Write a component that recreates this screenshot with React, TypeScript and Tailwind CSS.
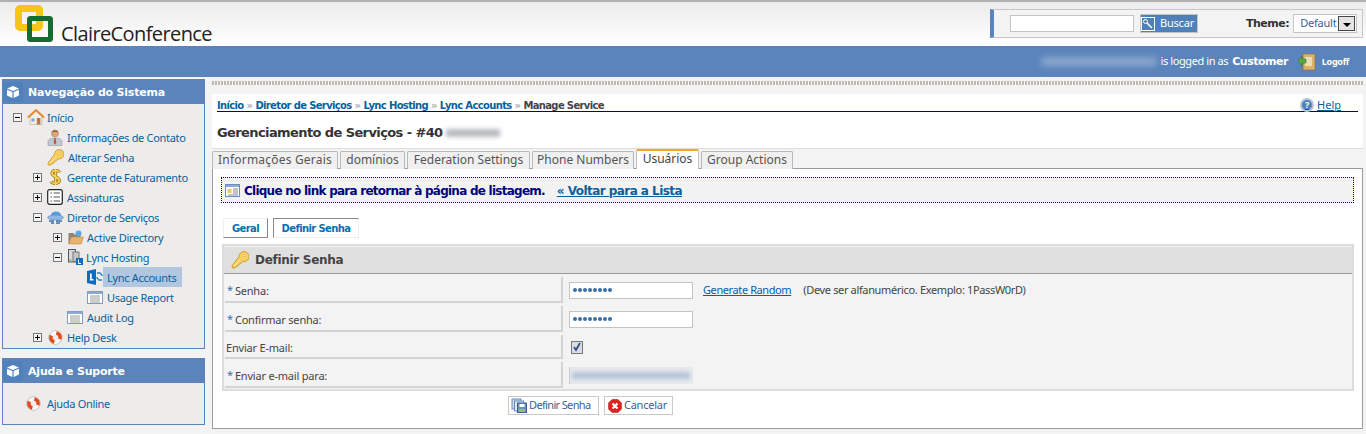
import React from 'react';

const font = "font-['Noto_Sans','Liberation_Sans',sans-serif]";

const Cube = () => (
  <svg width="14" height="14" viewBox="0 0 14 14">
    <path d="M7 1 13 3.5 7 6 1 3.5Z" fill="#fff" />
    <path d="M1 4.7 6.4 7v6L1 10.6Z" fill="#fff" />
    <path d="M13 4.7 7.6 7v6l5.4-2.4Z" fill="#fff" />
  </svg>
);

const Expander = ({ open }: { open?: boolean }) => (
  <span className="w-[9px] h-[9px] border border-[#777] bg-[#f4f4f4] flex items-center justify-center relative shrink-0">
    <span className="w-[5px] h-px bg-black" />
    {!open && <span className="absolute w-px h-[5px] bg-black" />}
  </span>
);

const KeyIcon = ({ size = 18 }: { size?: number }) => (
  <svg width={size} height={size} viewBox="0 0 18 18">
    <path d="M8 5.500A5 5 0 1 1 12.500 10.500L11 11l-1 1.500-2 .5-1 2-2 .5-1 1.500H1.500L1 15Z" fill="#f7cf62" stroke="#d49a28" />
    <ellipse cx="13.500" cy="4.500" rx="1.500" ry="1" fill="#fff4c8" stroke="#d49a28" strokeWidth=".5" />
    <path d="M3 15l6-6" stroke="#fff0b0" />
  </svg>
);

const LifeRing = () => (
  <svg width="15" height="17" viewBox="0 0 15 17">
    <circle cx="7.500" cy="8.500" r="6.700" fill="none" stroke="#b5b5b5" strokeWidth="1" />
    <circle cx="7.500" cy="8.500" r="4.600" fill="none" stroke="#f8f8f8" strokeWidth="3.600" />
    <circle cx="7.500" cy="8.500" r="4.600" fill="none" stroke="#e4491b" strokeWidth="3.600" strokeDasharray="8 6.450" transform="rotate(-80 7.500 8.500)" />
  </svg>
);

const ReportIcon = () => (
  <svg width="16" height="13" viewBox="0 0 16 13">
    <rect x=".5" y=".5" width="15" height="12" fill="#fff" stroke="#7f9cc6" />
    <rect x="1" y="1" width="14" height="2" fill="#8fa9d0" />
    <path d="M3 5h10M3 7h10M3 9h10M3 11h10" stroke="#9a9a9a" strokeWidth="1" />
  </svg>
);

const LyncBadge = () => (
  <svg width="16" height="16" viewBox="0 0 16 16">
    <path d="M0 2 9 0v16L0 14Z" fill="#0b6cc0" />
    <path d="M3 4.500v7h3.500V10H4.700V4.500Z" fill="#fff" />
    <path d="M10 4h3l2 2v1M15 11h-3l-2-2V8" fill="none" stroke="#2f80cf" strokeWidth="1.400" />
  </svg>
);

const HomeIcon = () => (
  <svg width="18" height="16" viewBox="0 0 18 16">
    <path d="M3 8v7.500h12V8L9 2.500Z" fill="#f3efe6" stroke="#b9a98f" strokeWidth=".6" />
    <path d="M.8 8.500 9 1l8.200 7.500" fill="none" stroke="#e8892b" strokeWidth="1.800" />
    <rect x="9.800" y="9" width="3.600" height="6.500" fill="#b9774a" />
    <rect x="4.500" y="9.500" width="3" height="3" fill="#7ea6d8" />
  </svg>
);

const PersonIcon = () => (
  <svg width="16" height="17" viewBox="0 0 16 17">
    <circle cx="8" cy="4.500" r="3.500" fill="#d9a77d" stroke="#a9744d" strokeWidth=".5" />
    <path d="M4.800 3.200C5.500 1 10.500 1 11.200 3.200L8 2.800Z" fill="#8d5a34" />
    <path d="M1 16.500v-3.500c0-3 3-4 7-4s7 1 7 4v3.500Z" fill="#c3c7cf" stroke="#8b8f99" strokeWidth=".5" />
    <path d="M7.300 9h1.400l.6 5-1.300 1.500L6.700 14Z" fill="#c84f3b" />
  </svg>
);

const DollarIcon = () => (
  <svg width="13" height="18" viewBox="0 0 13 18">
    <path d="M10.500 4.500C9.500 2 3.500 1.500 3 5c-.5 4 7.500 3.500 7.300 7.500C10 16 3.500 16 2.300 13.500M6.500 1v16" fill="none" stroke="#a87a12" strokeWidth="3.200" />
    <path d="M10.500 4.500C9.500 2 3.500 1.500 3 5c-.5 4 7.500 3.500 7.300 7.500C10 16 3.500 16 2.300 13.500M6.500 1v16" fill="none" stroke="#f6d55b" strokeWidth="1.600" />
  </svg>
);

const ListIcon = () => (
  <svg width="16" height="16" viewBox="0 0 16 16">
    <rect x=".7" y=".7" width="14.600" height="14.600" rx="2" fill="#fff" stroke="#222" strokeWidth="1.200" />
    <path d="M3.500 4h1.500M6.500 4H13M3.500 8h1.500M6.500 8H13M3.500 12h1.500M6.500 12H13" stroke="#555" strokeWidth="1.200" />
  </svg>
);

const CloudIcon = () => (
  <svg width="17" height="14" viewBox="0 0 17 14">
    <ellipse cx="9" cy="5" rx="5" ry="3.500" fill="#5b9bdc" />
    <ellipse cx="8.500" cy="7.500" rx="8" ry="2.500" fill="#8fb9e4" stroke="#4a7fb8" strokeWidth=".5" />
    <path d="M2 11h5M9 11h6M4 13h3M9 13h4" stroke="#3b6ea8" strokeWidth="1.300" />
  </svg>
);

const FolderIcon = () => (
  <svg width="16" height="15" viewBox="0 0 16 15">
    <path d="M.5 3h5l1 1.500h6V14H.5Z" fill="#8d8577" />
    <path d="M3 7h12.500L13 14H.8Z" fill="#eab26a" stroke="#b57d38" strokeWidth=".5" />
    <circle cx="10.500" cy="3.500" r="3" fill="#5ba8e6" />
  </svg>
);

const ServerIcon = () => (
  <svg width="16" height="16" viewBox="0 0 16 16">
    <rect x=".5" y=".5" width="7" height="12.500" fill="#d9d9d9" stroke="#555" />
    <rect x="5" y="3" width="6" height="9.500" fill="#c5c5c5" stroke="#777" />
    <rect x="8" y="9" width="7" height="7" fill="#0b6cc0" />
    <path d="M10.500 10.500v4h2.500" fill="none" stroke="#fff" />
    <rect x="1.500" y="10.500" width="2" height="1" fill="#3aa23a" />
  </svg>
);

const TreeLabel = ({ children }: { children: React.ReactNode }) => (
  <span className="block text-[#0a5f9e] text-[11px] leading-none whitespace-nowrap tracking-[-0.3px]">{children}</span>
);

const SideHeader = ({ title }: { title: string }) => (
  <div className="h-[25px] bg-[#5a84bb] flex items-center">
    <div className="w-[20px] h-[20px] bg-[#4f81bd] flex items-center justify-center">
      <Cube />
    </div>
    <span className="ml-[5px] pt-[3px] text-white font-bold text-[11px] tracking-[-0.2px] font-['DejaVu_Sans',sans-serif]">{title}</span>
  </div>
);

const Row = ({ pl, children }: { pl: number; children: React.ReactNode }) => (
  <div className="h-[20px] flex items-center" style={{ paddingLeft: pl }}>
    {children}
  </div>
);

const Tab = ({ label, width, active }: { label: string; width: string; active?: boolean }) => (
  <div
    className={
      active
        ? `${width} h-[20px] pb-[2px] flex items-center justify-center bg-white border border-[#c2c2c2] border-b-0 border-t-2 border-t-[#f0a830] rounded-t-[2px] text-[12px] text-[#444] relative z-10`
        : `${width} h-[18px] pb-[2px] flex items-center justify-center bg-[#f0f0f0] border border-[#b9b9b9] border-b-0 rounded-t-[2px] text-[12px] text-[#555]`
    }
  >
    {label}
  </div>
);

const FormRow = ({ h, required, label, children }: { h: string; required?: boolean; label: string; children?: React.ReactNode }) => (
  <div className={`flex ${h}`}>
    <div className="w-[338px] ml-[1px] mb-[3px] pt-[4px] border-b-2 border-r-2 border-[#d4d4d4] flex items-center pl-[1px] text-[11px] text-[#444] tracking-[-0.2px]">
      {required && <span className="text-[#2f6fb0] mr-[2px] ml-[1px] -mt-[2px]">*</span>}
      <span>{label}</span>
    </div>
    <div className="flex-1 flex items-center pl-[6px] mb-[3px]">{children}</div>
  </div>
);

const PwInput = () => (
  <div className="w-[124px] h-[17px] bg-white border border-[#c4c4c4] flex items-center pl-[3px] gap-[1px]">
    {[0, 1, 2, 3, 4, 5, 6, 7].map((i) => (
      <span key={i} className="w-[4px] h-[4px] rounded-full bg-[#3a6ea5]" />
    ))}
  </div>
);

export default function App() {
  return (
    <div className={`w-[1366px] h-[434px] overflow-hidden bg-[#f3f3f3] ${font}`}>
      <div className="h-[46px] border-t-2 border-[#b0b0b0] bg-gradient-to-b from-[#ececec] to-white flex justify-between">
        <div className="flex pl-[15px] pt-[3px]">
          <svg width="40" height="38" viewBox="0 0 40 38">
            <rect x="3.500" y="3.500" width="21" height="19" rx="1.500" fill="none" stroke="#f5c518" strokeWidth="7" />
            <rect x="14.500" y="13.500" width="21" height="21" rx="1" fill="none" stroke="#176b32" strokeWidth="5" />
          </svg>
          <span className="ml-[6px] mt-[17px] text-[20px] leading-[24px] font-medium text-[#222] font-['Open_Sans',sans-serif] tracking-[-0.6px]">
            ClaireConference
          </span>
        </div>
        <div className="mt-[7px] mr-[3px] w-[373px] h-[29px] border border-[#c6c6c6] border-l-[4px] border-l-[#5a84bb] bg-[#f3f3f3] flex items-center pl-[16px]">
          <div className="w-[124px] h-[17px] bg-white border border-[#c4c4c4]" />
          <div className="ml-[6px] w-[58px] h-[19px] bg-[#4f81b8] border border-[#c4c4c4] flex items-center">
            <span className="w-[14px] h-[14px] border border-white flex items-center justify-center">
              <svg width="12" height="12" viewBox="0 0 12 12">
                <circle cx="3.500" cy="3.500" r="2" fill="none" stroke="#fff" />
                <path d="M5 5l5 5" stroke="#fff" strokeWidth="1.500" />
              </svg>
            </span>
            <span className="ml-[5px] text-[11px] text-white tracking-[-0.2px]">Buscar</span>
          </div>
          <span className="ml-[48px] pt-[2px] text-[11px] font-bold text-[#333] font-['DejaVu_Sans',sans-serif] tracking-[-0.5px]">Theme:</span>
          <div className="ml-[4px] w-[64px] h-[19px] bg-white border border-[#c4c4c4] flex items-center justify-between pl-[6px] pr-[1px]">
            <span className="text-[11px] text-[#3b5f95] tracking-[-0.2px]">Default</span>
            <span className="w-[17px] h-[15px] bg-[#e4e4e4] border border-[#444] flex items-center justify-center">
              <span className="w-0 h-0 border-x-[4px] border-x-transparent border-t-[4px] border-t-black mt-[2px]" />
            </span>
          </div>
        </div>
      </div>

      <div className="h-[31px] bg-[#5a84bb] flex items-center justify-end text-white text-[11px]">
        <span className="w-[116px] h-[9px] mr-[3px] bg-[#8aa6cd] rounded-[4px] blur-[3px]" />
        <span className="tracking-[-0.4px]">is logged in as</span>
        <span className="ml-[4px] pt-[2px] font-bold font-['DejaVu_Sans',sans-serif] tracking-[-0.5px]">Customer</span>
        <svg className="ml-[10px]" width="18" height="18" viewBox="0 0 18 18">
          <rect x="5" y="1" width="12" height="16" fill="#dcb26a" stroke="#8a6a33" strokeWidth=".6" />
          <rect x="7" y="4" width="7" height="9" fill="#e9ddb8" />
          <path d="M8 6H4V3L0 8l4 5v-3h4Z" fill="#58a845" stroke="#2f6f2a" strokeWidth=".5" />
        </svg>
        <span className="ml-[6px] mr-[17px] text-[9px] font-bold tracking-[-0.3px]">Logoff</span>
      </div>

      <div className="flex pt-[2px] pl-[2px]">
        <aside className="w-[203px] shrink-0">
          <div className="h-[270px] border border-[#5a84bb] border-t-0 bg-[#edecea]">
            <SideHeader title="Navegação do Sistema" />
            <div className="pt-[3px]">
              <Row pl={10}>
                <Expander open />
                <span className="ml-[5px] mr-[2px] flex"><HomeIcon /></span>
                <TreeLabel>Início</TreeLabel>
              </Row>
              <Row pl={44}>
                <span className="w-[20px] flex"><PersonIcon /></span>
                <TreeLabel>Informações de Contato</TreeLabel>
              </Row>
              <Row pl={44}>
                <span className="w-[21px] flex"><KeyIcon size={17} /></span>
                <TreeLabel>Alterar Senha</TreeLabel>
              </Row>
              <Row pl={30}>
                <Expander />
                <span className="ml-[7px] mr-[5px] flex"><DollarIcon /></span>
                <TreeLabel>Gerente de Faturamento</TreeLabel>
              </Row>
              <Row pl={30}>
                <Expander />
                <span className="ml-[5px] mr-[4px] flex"><ListIcon /></span>
                <TreeLabel>Assinaturas</TreeLabel>
              </Row>
              <Row pl={30}>
                <Expander open />
                <span className="ml-[5px] mr-[3px] flex"><CloudIcon /></span>
                <TreeLabel>Diretor de Serviços</TreeLabel>
              </Row>
              <Row pl={50}>
                <Expander />
                <span className="ml-[6px] mr-[3px] flex"><FolderIcon /></span>
                <TreeLabel>Active Directory</TreeLabel>
              </Row>
              <Row pl={50}>
                <Expander open />
                <span className="ml-[6px] mr-[2px] flex"><ServerIcon /></span>
                <TreeLabel>Lync Hosting</TreeLabel>
              </Row>
              <Row pl={84}>
                <LyncBadge />
                <span className="h-[20px] px-[4px] w-[79px] bg-[#b3c6df] flex items-center">
                  <TreeLabel>Lync Accounts</TreeLabel>
                </span>
              </Row>
              <Row pl={84}>
                <ReportIcon />
                <span className="ml-[4px] flex"><TreeLabel>Usage Report</TreeLabel></span>
              </Row>
              <Row pl={64}>
                <ReportIcon />
                <span className="ml-[4px] flex"><TreeLabel>Audit Log</TreeLabel></span>
              </Row>
              <Row pl={30}>
                <Expander />
                <span className="ml-[6px] mr-[4px] flex"><LifeRing /></span>
                <TreeLabel>Help Desk</TreeLabel>
              </Row>
            </div>
          </div>

          <div className="mt-[9px] h-[67px] border border-[#5a84bb] border-t-0 bg-[#edecea]">
            <SideHeader title="Ajuda e Suporte" />
            <div className="h-[42px] flex items-center pl-[23px] pb-[2px]">
              <LifeRing />
              <span className="ml-[6px] flex"><TreeLabel>Ajuda Online</TreeLabel></span>
            </div>
          </div>
        </aside>

        <main className="ml-[7px] flex-1 mr-[3px] min-w-0">
          <div className="h-[4px] mt-[2px] bg-[repeating-linear-gradient(90deg,#bdb9ae_0px,#bdb9ae_2px,#f3f3f3_2px,#f3f3f3_3px)]" />
          <div className="mt-[9px] bg-white h-[54px] pl-[5px] pr-[5px]">
            <div className="h-[18px] border-b border-[#000080] flex items-center justify-between pt-[5px] text-[10px] font-bold font-['DejaVu_Sans',sans-serif] tracking-[-0.65px]">
              <div className="flex items-center gap-[3px] text-[#0a5f9e]">
                <span>Início</span><span className="text-[#aaa]">»</span>
                <span>Diretor de Serviços</span><span className="text-[#aaa]">»</span>
                <span>Lync Hosting</span><span className="text-[#aaa]">»</span>
                <span>Lync Accounts</span><span className="text-[#aaa]">»</span>
                <span className="text-[#444]">Manage Service</span>
              </div>
              <div className="flex items-center gap-[3px] mr-[17px] font-normal text-[11px] text-[#0a5f9e] font-['Noto_Sans',sans-serif] tracking-normal underline">
                <span className="w-[14px] h-[14px] rounded-full bg-[#4f81bd] border-2 border-[#b8c4d4] flex items-center justify-center text-white text-[9px] font-bold no-underline">?</span>
                <span>Help</span>
              </div>
            </div>
            <div className="mt-[11px] flex items-center text-[13px] font-bold text-[#333] font-['DejaVu_Sans',sans-serif] tracking-[-0.6px]">
              Gerenciamento de Serviços - #40
              <span className="ml-[3px] w-[54px] h-[8px] bg-[#b9bcc0] blur-[2px]" />
            </div>
          </div>
          <div className="h-[21px] border-t border-[#ddd] flex items-end gap-[2px]">
            <Tab label="Informações Gerais" width="w-[126px] tracking-[0.2px]" />
            <Tab label="domínios" width="w-[65px]" />
            <Tab label="Federation Settings" width="w-[123px]" />
            <Tab label="Phone Numbers" width="w-[102px]" />
            <Tab label="Usuários" width="w-[63px]" active />
            <Tab label="Group Actions" width="w-[92px]" />
          </div>
          <div className="h-[261px] -mt-px border border-[#9c9c9c] bg-white px-[8px] pt-[8px]">
            <div className="h-[26px] border border-dotted border-[#000080] bg-[#f2f2f2] flex items-center pl-[3px] pt-[2px] text-[12px] font-bold font-['DejaVu_Sans',sans-serif] tracking-[-0.75px]">
              <svg className="-mt-[2px]" width="15" height="13" viewBox="0 0 15 13">
                <rect x=".5" y=".5" width="14" height="12" fill="#fff" stroke="#6d8fbf" />
                <rect x="1" y="1" width="13" height="2" fill="#8fa9d0" />
                <rect x="2.500" y="5" width="4" height="4" fill="#f2c94c" />
                <path d="M8 5h5M8 7h5M8 9h5M3 11h10" stroke="#888" />
              </svg>
              <span className="ml-[4px] text-[#000080]">Clique no link para retornar à página de listagem.</span>
              <span className="ml-[12px] text-[#0a5f9e] underline tracking-[-0.55px]">« Voltar para a Lista</span>
            </div>
            <div className="mt-[15px] ml-[2px] flex gap-[5px] text-[10px] font-bold text-[#0a6eb0] font-['DejaVu_Sans',sans-serif] tracking-[-0.6px]">
              <div className="h-[20px] w-[45px] border border-[#eee] border-r-[#888] border-b-[#888] flex items-center justify-center">Geral</div>
              <div className="h-[20px] w-[86px] border border-[#eee] border-l-[#888] border-t-[#888] flex items-center justify-center">Definir Senha</div>
            </div>
            <div className="mt-[6px] ml-[1px] h-[147px] border-2 border-[#dcdcdc] bg-[#f3f3f3] pt-px">
              <div className="h-[27px] bg-[#e0e0e0] border-b border-[#999] flex items-center pl-[7px]">
                <KeyIcon />
                <span className="ml-[6px] text-[12px] font-bold text-[#444] font-['DejaVu_Sans',sans-serif] tracking-[-0.3px]">Definir Senha</span>
              </div>
              <div className="pt-[3px]">
                <FormRow h="h-[29px]" required label="Senha:">
                  <PwInput />
                  <span className="ml-[10px] text-[11px] text-[#0a5f9e] underline tracking-[-0.4px]">Generate Random</span>
                  <span className="ml-[12px] text-[11px] text-[#444] tracking-[-0.35px]">(Deve ser alfanumérico. Exemplo: 1PassW0rD)</span>
                </FormRow>
                <FormRow h="h-[29px]" required label="Confirmar senha:">
                  <PwInput />
                </FormRow>
                <FormRow h="h-[27px]" label="Enviar E-mail:">
                  <span className="ml-[2px] w-[12px] h-[13px] bg-[#d8dde6] border border-[#777] flex items-center justify-center">
                    <svg width="10" height="10" viewBox="0 0 10 10">
                      <path d="M2 5l2 3 4-7" fill="none" stroke="#3a4f8a" strokeWidth="1.800" />
                    </svg>
                  </span>
                </FormRow>
                <FormRow h="h-[29px]" required label="Enviar e-mail para:">
                  <div className="w-[124px] h-[17px] bg-[#e8e9ec] border-l border-[#ccc] overflow-hidden flex items-center pl-[2px]">
                    <span className="w-[118px] h-[7px] bg-[#b5c4d8] blur-[2px]" />
                  </div>
                </FormRow>
              </div>
            </div>
            <div className="mt-[5px] ml-[287px] flex gap-[5px] text-[11px] text-[#3b5f95] whitespace-nowrap">
              <div className="h-[19px] w-[91px] border border-[#c9c9c9] flex items-center pl-[2px] gap-[2px] tracking-[-0.65px]">
                <svg width="16" height="15" viewBox="0 0 16 15">
                  <rect x="1" y="1" width="9" height="10" fill="#c9d6ea" stroke="#6d8fbf" />
                  <rect x="3.500" y="3" width="9" height="10" fill="#dce5f2" stroke="#6d8fbf" />
                  <rect x="6.500" y="5" width="9" height="9.500" fill="#6d8fbf" stroke="#3d5f90" />
                  <rect x="8" y="11" width="6" height="3" fill="#8fc46a" />
                  <rect x="8.500" y="6" width="5" height="3" fill="#fff" />
                </svg>
                <span>Definir Senha</span>
              </div>
              <div className="h-[19px] w-[69px] border border-[#c9c9c9] flex items-center pl-[3px] gap-[2px] tracking-[-0.25px]">
                <svg width="14" height="14" viewBox="0 0 14 14">
                  <path d="M4 .5h6L13.500 4v6L10 13.500H4L.5 10V4Z" fill="#e0201c" stroke="#a81612" strokeWidth=".5" />
                  <path d="M4.500 4.500l5 5M9.500 4.500l-5 5" stroke="#fff" strokeWidth="2.200" />
                </svg>
                <span>Cancelar</span>
              </div>
            </div>
          </div>
        </main>
      </div>
    </div>
  );
}
